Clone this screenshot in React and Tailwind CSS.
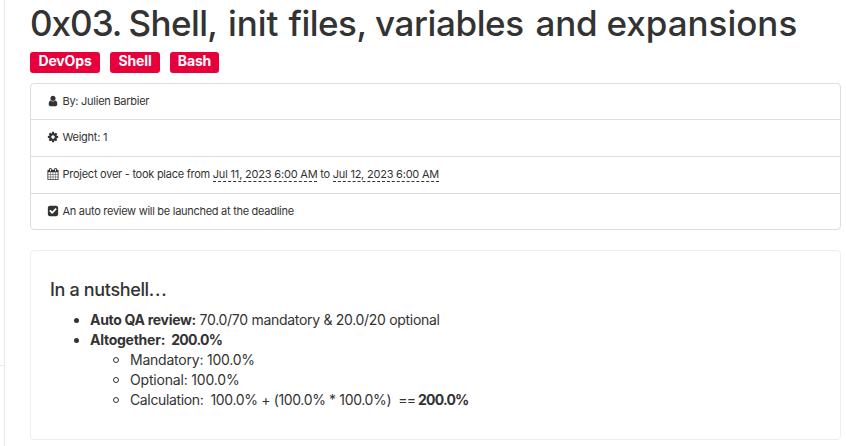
const ICONS = {
  user: "M1536 1399q0 109-62.5 187t-150.5 78h-854q-88 0-150.5-78t-62.5-187q0-85 8.5-160.5t31.5-152 58.5-131 94-89 134.5-34.5q131 128 313 128t313-128q76 0 134.5 34.5t94 89 58.5 131 31.5 152 8.5 160.5zm-256-887q0 159-112.5 271.5t-271.5 112.5-271.5-112.5-112.5-271.5 112.5-271.5 271.5-112.5 271.5 112.5 112.5 271.5z",
  cog: "M1152 896q0-106-75-181t-181-75-181 75-75 181 75 181 181 75 181-75 75-181zm512-109v222q0 12-8 23t-20 13l-185 28q-19 54-39 91 35 50 107 138 10 12 10 25t-9 23q-27 37-99 108t-94 71q-12 0-26-9l-138-108q-44 23-91 38-16 136-29 186-7 28-36 28h-222q-14 0-24.5-8.5t-11.5-21.5l-28-184q-49-16-90-37l-141 107q-10 9-25 9-14 0-25-11-126-114-165-168-7-10-7-23 0-12 8-23 15-21 51-66.5t54-70.5q-27-50-41-99l-183-27q-13-2-21-12.5t-8-23.5v-222q0-12 8-23t19-13l186-28q14-46 39-92-40-57-107-138-10-12-10-24 0-10 9-23 26-36 98.5-107.5t94.5-71.5q13 0 26 10l138 107q44-23 91-38 16-136 29-186 7-28 36-28h222q14 0 24.5 8.5t11.5 21.5l28 184q49 16 90 37l142-107q9-9 24-9 13 0 25 10 129 119 165 170 7 8 7 22 0 12-8 23-15 21-51 66.5t-54 70.5q26 50 41 98l183 28q13 2 21 12.5t8 23.5z",
  calendar: "M192 1664h288v-288h-288v288zm352 0h320v-288h-320v288zm-352-352h288v-320h-288v320zm352 0h320v-320h-320v320zm-352-384h288v-288h-288v288zm736 736h320v-288h-320v288zm-384-736h320v-288h-320v288zm768 736h288v-288h-288v288zm-384-352h320v-320h-320v320zm-352-864v-288q0-13-9.5-22.5t-22.5-9.5h-64q-13 0-22.5 9.5t-9.5 22.5v288q0 13 9.5 22.5t22.5 9.5h64q13 0 22.5-9.5t9.5-22.5zm736 864h288v-320h-288v320zm-384-384h320v-288h-320v288zm384 0h288v-288h-288v288zm32-480v-288q0-13-9.5-22.5t-22.5-9.5h-64q-13 0-22.5 9.5t-9.5 22.5v288q0 13 9.5 22.5t22.5 9.5h64q13 0 22.5-9.5t9.5-22.5zm384-64v1280q0 52-38 90t-90 38h-1408q-52 0-90-38t-38-90v-1280q0-52 38-90t90-38h128v-96q0-66 47-113t113-47h64q66 0 113 47t47 113v96h384v-96q0-66 47-113t113-47h64q66 0 113 47t47 113v96h128q52 0 90 38t38 90z",
  check: "M813 1299l614-614q19-19 19-45t-19-45l-102-102q-19-19-45-19t-45 19l-467 467-211-211q-19-19-45-19t-45 19l-102 102q-19 19-19 45t19 45l358 358q19 19 45 19t45-19zm851-883v960q0 119-84.5 203.5t-203.5 84.5h-960q-119 0-203.5-84.5t-84.5-203.5v-960q0-119 84.5-203.5t203.5-84.5h960q119 0 203.5 84.5t84.5 203.5z",
};

function Icon({ name }) {
  return (
    <svg viewBox="0 0 1792 1792" className="mr-[3.5px] size-[12px] shrink-0" fill="currentColor">
      <path d={ICONS[name]} />
    </svg>
  );
}

function Row({ icon, className, children }) {
  return (
    <li className={`flex items-center border-[#ddd] pb-[2px] pl-[16px] text-[11px] leading-4 tracking-[-0.26px] ${className}`}>
      <Icon name={icon} />
      {children}
    </li>
  );
}

function Tag({ className, children }) {
  return (
    <span className={`flex h-[21px] justify-center rounded-[3px] bg-[#e6003c] text-[14px] leading-[18px] font-bold tracking-[-0.15px] text-white ${className}`}>
      {children}
    </span>
  );
}

function Item({ hollow, children }) {
  return (
    <li className="flex h-5 items-center whitespace-pre">
      <span className={hollow ? "mr-[11px] ml-[63px] size-[6px] rounded-full border border-[#333]" : "mr-[11px] ml-[24px] size-[5px] rounded-full bg-[#333]"} />
      {children}
    </li>
  );
}

export default function App() {
  return (
    <div className="flex h-[446px] w-[846px] overflow-hidden bg-white font-['Inter',sans-serif] text-[#333]">
      <aside className="w-[5px] shrink-0 border-r border-[#e7e7e7]">
        <div className="h-[366px] border-b border-[#e7e7e7]" />
      </aside>
      <main className="ml-[25px] w-[811px] shrink-0">
        <h1 className="flex h-[52px] text-[35px] leading-[46px] font-medium whitespace-pre">
          <span className="w-[98.5px] tracking-[-1px]">0x03. </span>
          <span className="w-[99.5px] tracking-[-0.6px]">Shell, </span>
          <span className="w-[60.5px] tracking-[-0.1px]">init </span>
          <span className="w-[86.5px] tracking-[-0.5px]">files, </span>
          <span className="w-[160.5px] tracking-[-0.4px]">variables </span>
          <span className="w-[71px] tracking-[-0.2px]">and </span>
          <span className="tracking-[-0.02px]">expansions</span>
        </h1>
        <div className="flex gap-[10px]">
          <Tag className="w-[70px]">DevOps</Tag>
          <Tag className="w-[50px]">Shell</Tag>
          <Tag className="w-[49px]">Bash</Tag>
        </div>
        <ul className="mt-[10px] rounded-[4px] border border-[#ddd]">
          <Row icon="user" className="h-[36px] border-b">
            <span>By: Julien Barbier</span>
          </Row>
          <Row icon="cog" className="h-[37px] border-b">
            <span>Weight: 1</span>
          </Row>
          <Row icon="calendar" className="h-[37px] border-b">
            <span className="whitespace-nowrap">
              Project over - took place from{" "}
              <span className="border-b border-dashed border-[#333] tracking-[-0.19px]">Jul 11, 2023 6:00 AM</span> to{" "}
              <span className="border-b border-dashed border-[#333] tracking-[-0.22px]">Jul 12, 2023 6:00 AM</span>
            </span>
          </Row>
          <Row icon="check" className="h-[35px]">
            <span className="tracking-[-0.28px]">An auto review will be launched at the deadline</span>
          </Row>
        </ul>
        <section className="mt-5 h-[190px] rounded-[4px] border border-[#eee] px-[19px] pt-[28px]">
          <h2 className="text-[18px] leading-[22px] font-medium tracking-[-0.35px]">
            In a nutshell<span className="tracking-[0.8px]">...</span>
          </h2>
          <ul className="mt-[9px] text-[14px] leading-5 tracking-[-0.3px]">
            <Item><b>Auto QA review:</b> 70.0/70 mandatory &amp; 20.0/20 optional</Item>
            <Item><b className="tracking-[-0.25px]">Altogether:  </b><b className="tracking-[-0.7px]">200.0%</b></Item>
            <Item hollow><span className="tracking-[-0.22px]">Mandatory: 100.0%</span></Item>
            <Item hollow><span className="tracking-[-0.18px]">Optional: 100.0%</span></Item>
            <Item hollow><span className="tracking-[-0.36px]">Calculation:  100.0% + (100.0% * 100.0%)  </span><span className="tracking-[-0.9px]">== </span><b className="tracking-[-0.8px]">200.0%</b></Item>
          </ul>
        </section>
      </main>
    </div>
  );
}
